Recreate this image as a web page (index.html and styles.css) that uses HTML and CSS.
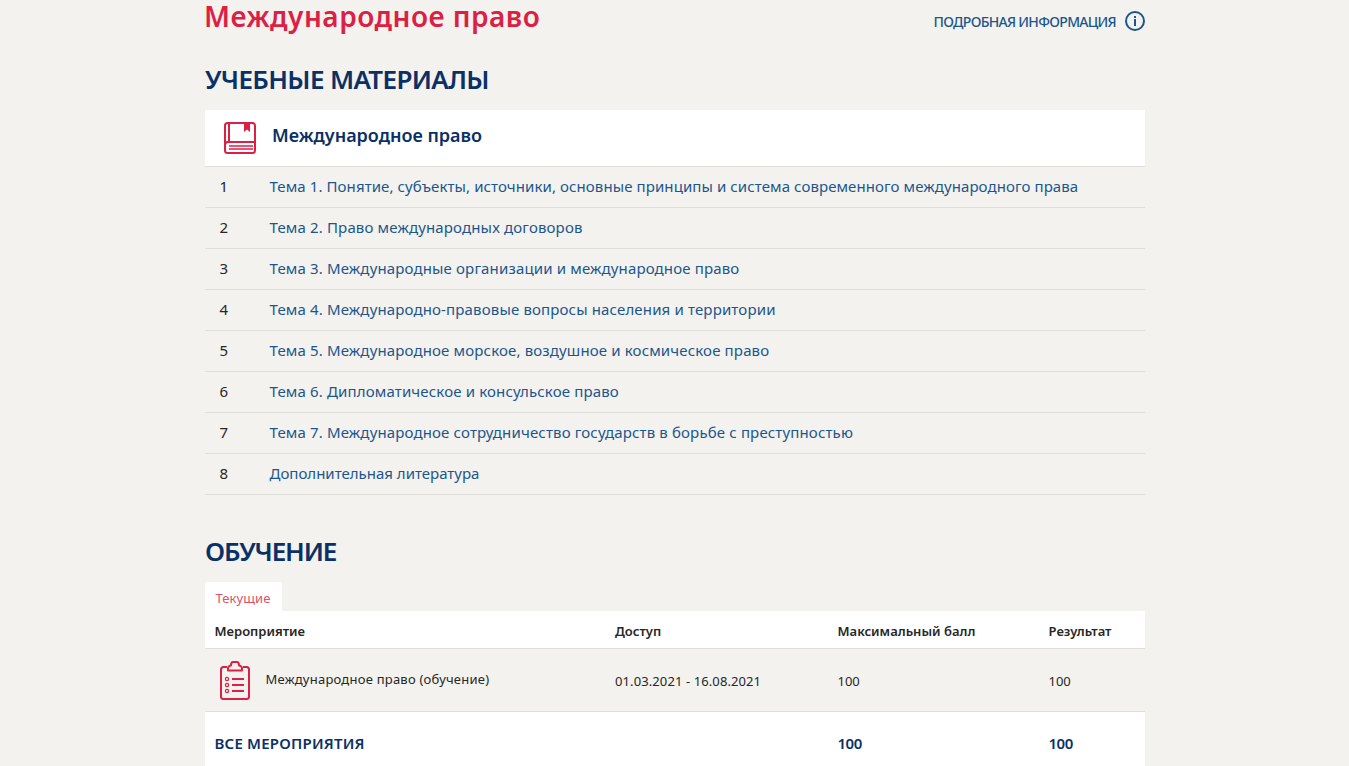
FILE: index.html
```html
<!DOCTYPE html>
<html lang="ru">
<head>
<meta charset="utf-8">
<title>Международное право</title>
<link rel="stylesheet" href="styles.css">
</head>
<body>
<main class="page">
  <header class="top">
    <h1 class="title">Международное право</h1>
    <a class="more"><span class="t-more">ПОДРОБНАЯ ИНФОРМАЦИЯ</span>
      <svg class="info" width="20" height="20" viewBox="0 0 20 20"><circle cx="10" cy="10" r="9" fill="none" stroke="#1c568d" stroke-width="2"/><path d="M9 5h2v2H9zM9 8h2v7H9z" fill="#1c568d"/></svg>
    </a>
  </header>
  <h2 class="section section-materials">УЧЕБНЫЕ МАТЕРИАЛЫ</h2>
  <section class="materials">
    <div class="course">
      <svg class="book" width="34" height="34" viewBox="0 0 34 34" fill="none" stroke="#dc1f45" stroke-width="2"><rect x="2" y="2" width="30" height="30" rx="2.5"/><path d="M6 2v18M2 24Q2 21 5 21H32"/><path d="M6 25h24M6 28h24" stroke-width="1.700"/><path d="M21 2h6v9l-3-2.500L21 11z" fill="#dc1f45" stroke="none"/></svg>
      <span class="t-course">Международное право</span>
    </div>
    <div class="row"><span class="num">1</span><a class="t-r1">Тема 1. Понятие, субъекты, источники, основные принципы и система современного международного права</a></div>
    <div class="row"><span class="num">2</span><a>Тема 2. Право международных договоров</a></div>
    <div class="row"><span class="num">3</span><a>Тема 3. Международные организации и международное право</a></div>
    <div class="row"><span class="num">4</span><a>Тема 4. Международно-правовые вопросы населения и территории</a></div>
    <div class="row"><span class="num">5</span><a>Тема 5. Международное морское, воздушное и космическое право</a></div>
    <div class="row"><span class="num">6</span><a>Тема 6. Дипломатическое и консульское право</a></div>
    <div class="row"><span class="num">7</span><a>Тема 7. Международное сотрудничество государств в борьбе с преступностью</a></div>
    <div class="row"><span class="num">8</span><a class="t-r8">Дополнительная литература</a></div>
  </section>
  <h2 class="section section-study">ОБУЧЕНИЕ</h2>
  <div class="tab">Текущие</div>
  <section class="events">
    <div class="grid head"><span>Мероприятие</span><span>Доступ</span><span>Максимальный балл</span><span>Результат</span></div>
    <div class="grid item">
      <div class="event">
        <svg class="clip" width="32" height="40" viewBox="0 0 32 40" fill="none" stroke="#dc1f45" stroke-width="2"><path d="M8 6H4.500Q2 6 2 8.500V35.500Q2 38 4.500 38H27.500Q30 38 30 35.500V8.500Q30 6 27.500 6H24"/><path d="M9 9.500Q8.500 4.500 12 4.500Q12 1 14 1H18Q20 1 20 4.500Q23.500 4.500 23 9.500Z" stroke-linejoin="round"/><path d="M13 18h12M13 24h12M13 30h12"/><g stroke-width="1.200"><circle cx="8" cy="18" r="1.600"/><circle cx="8" cy="24" r="1.600"/><circle cx="8" cy="30" r="1.600"/></g></svg>
        <span class="t-study-item">Международное право (обучение)</span>
      </div>
      <span class="t-date">01.03.2021 - 16.08.2021</span><span>100</span><span>100</span>
    </div>
    <div class="grid total"><span class="t-all">ВСЕ МЕРОПРИЯТИЯ</span><span></span><span class="t-sum">100</span><span class="t-sum">100</span></div>
  </section>
</main>
</body>
</html>
```
FILE: styles.css
```css
* { box-sizing: border-box; }
body { margin: 0; height: 766px; overflow: hidden; background: #f3f2ee; color: #272727; font: 15px/20px "Noto Sans", "Open Sans", sans-serif; }
.page { width: 940px; margin-left: 205px; }
.top { display: flex; justify-content: space-between; height: 58px; }
.title { margin: 0 0 0 -1px; color: #dc1f45; font-size: 28px; font-weight: 600; line-height: 32px; letter-spacing: .5px; white-space: nowrap; }
.more { display: flex; align-items: center; gap: 9px; height: 42px; color: #1c568d; font-size: 14px; font-weight: 500; white-space: nowrap; }
.t-more { padding-top: 2px; letter-spacing: -.7px; }
.section { margin: 0; color: #0b3065; font-size: 26px; font-weight: 600; white-space: nowrap; }
.section-materials { height: 52px; line-height: 42px; letter-spacing: -.65px; }
.course { display: flex; align-items: center; gap: 15px; height: 57px; padding: 0 0 0 18px; background: #fff; border-bottom: 1px solid #dededb; color: #0b3065; font-size: 18px; font-weight: 600; }
.t-course { padding-bottom: 6px; }
.row { display: flex; align-items: center; height: 41px; padding-bottom: 2px; border-bottom: 1px solid #dededb; color: #1c568d; white-space: nowrap; letter-spacing: .15px; }
.num { width: 64.500px; padding-left: 14.500px; color: #272727; }
.t-r1 { letter-spacing: .092px; }
.t-r8 { letter-spacing: 0; }
.section-study { height: 87px; padding-top: 35px; line-height: 42px; letter-spacing: -1.15px; }
.tab { width: 77px; height: 29px; padding: 6px 0 0 10.500px; background: #fff; border-radius: 2px 2px 0 0; color: #dc5268; font-size: 13px; letter-spacing: .1px; }
.grid { display: grid; grid-template-columns: 400.500px 222.500px 211px 1fr; align-items: center; padding-left: 9.500px; white-space: nowrap; font-size: 13px; }
.head { height: 38px; padding-top: 2px; background: #fff; border-bottom: 1px solid #dededb; font-weight: 600; }
.item { height: 63px; padding-top: 1px; border-bottom: 1px solid #dededb; }
.event { display: flex; align-items: center; gap: 14.500px; padding-left: 4.500px; }
.t-study-item { padding-bottom: 3px; letter-spacing: .23px; }
.t-date { letter-spacing: .1px; }
.total { height: 64px; padding-bottom: 2px; background: #fff; color: #0b3065; font-size: 15px; font-weight: 600; }
.t-all { letter-spacing: .2px; }
.t-sum { letter-spacing: -.5px; }
```
